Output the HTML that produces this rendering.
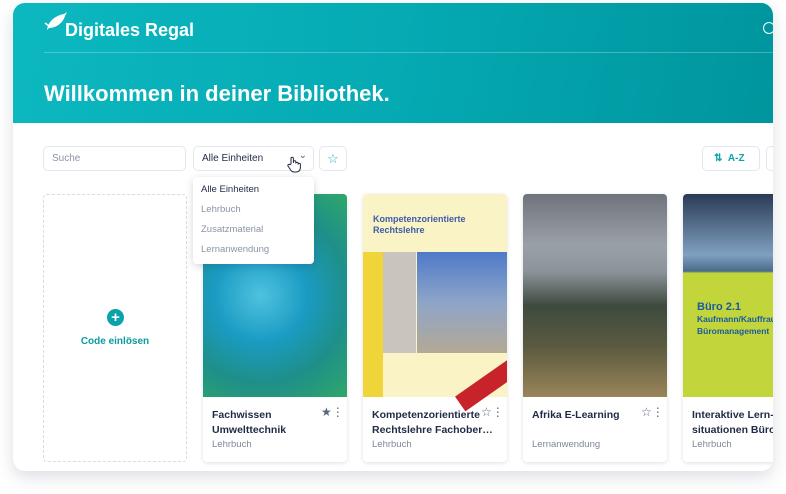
<!DOCTYPE html>
<html><head><meta charset="utf-8"><style>
*{margin:0;padding:0;box-sizing:border-box}
body{width:786px;height:494px;background:#fff;font-family:"Liberation Sans",sans-serif;position:relative;overflow:hidden}
.win{position:absolute;left:13px;top:3px;width:760px;height:468px;border-radius:12px;overflow:hidden;background:#fff;box-shadow:0 6px 16px rgba(60,70,100,.18)}
.hdr{position:absolute;left:0;top:0;width:760px;height:120px;background:linear-gradient(100deg,#0cb8c0 0%,#05aab3 50%,#00959e 100%)}
.abs{position:absolute}
.inp{position:absolute;border:1px solid #e3e7ef;border-radius:5px;background:#fff;font-size:10px}
.card{position:absolute;top:191px;width:144px;height:268px;border-radius:4px;background:#fff;box-shadow:0 1px 4px rgba(40,50,80,.15);overflow:hidden}
.cov{position:absolute;left:0;top:0;width:144px;height:203px}
.t{position:absolute;left:9px;top:214px;font-size:10.5px;font-weight:bold;color:#1f2a44;line-height:15px;white-space:nowrap}
.s{position:absolute;left:9px;top:245px;font-size:9.5px;color:#7d879b}
.ic{position:absolute;top:211px;font-size:12px;color:#5a6680}
</style></head><body>
<div class="win">
<div class="hdr">
 <svg class="abs" style="left:31px;top:8px" width="26" height="22" viewBox="0 0 26 22"><path d="M3 19 C4 11 10 5 20 3 L23 1 L21 5 C19 12 12 17 5 17 Z" fill="#fff"/><path d="M1 12 L5 15" stroke="#fff" stroke-width="1.5"/></svg>
 <div class="abs" style="left:52px;top:17px;color:#fff;font-size:18px;font-weight:bold">Digitales Regal</div>
 <div class="abs" style="left:750px;top:19px;width:12px;height:12px;border:1.5px solid #fff;border-radius:50%"></div>
 <div class="abs" style="left:31px;top:49px;width:729px;height:1px;background:rgba(255,255,255,.25)"></div>
 <div class="abs" style="left:31px;top:78px;color:#fff;font-size:22px;font-weight:bold">Willkommen in deiner Bibliothek.</div>
</div>
<div class="inp" style="left:30px;top:143px;width:143px;height:25px;padding:6px 8px;color:#8a93a6">Suche</div>
<div class="inp" style="left:180px;top:143px;width:121px;height:25px;padding:6px 8px;color:#1f2a44">Alle Einheiten<span style="position:absolute;right:6px;top:3px;color:#5a6680;font-size:10px">⌄</span></div>
<div class="inp" style="left:306px;top:143px;width:28px;height:25px;color:#2ab3bb;text-align:center;line-height:23px;font-size:13px">☆</div>
<div class="inp" style="left:689px;top:143px;width:58px;height:25px;color:#0aa2ab;font-weight:bold;line-height:23px;padding-left:11px">⇅&nbsp;&nbsp;A-Z</div>
<div class="inp" style="left:753px;top:143px;width:20px;height:25px"></div>
<div class="abs" style="left:30px;top:191px;width:144px;height:268px;border:1px dashed #d6dbe5;border-radius:4px">
 <div class="abs" style="left:63px;top:114px;width:17px;height:17px;border-radius:50%;background:#0aa2ab;color:#fff;text-align:center;font-weight:bold;font-size:15px;line-height:17px">+</div>
 <div class="abs" style="left:0;width:142px;top:141px;text-align:center;color:#0a9aa3;font-size:10px;font-weight:bold">Code einlösen</div>
</div>
<div class="card" style="left:190px"><div class="cov" style="background:radial-gradient(circle at 40% 50%,#4fc2e0 0,#1a9bc2 35%,#1e8f8a 65%,#2fa76a 100%)"></div>
 <div class="t">Fachwissen<br>Umwelttechnik</div><div class="s">Lehrbuch</div><div class="ic" style="left:118px">★⋮</div></div>
<div class="card" style="left:350px"><div class="cov" style="background:#faf3c6">
 <div class="abs" style="left:10px;top:20px;color:#3c5da8;font-size:9px;font-weight:bold;line-height:11px">Kompetenzorientierte<br>Rechtslehre</div>
 <div class="abs" style="left:0;top:58px;width:20px;height:145px;background:#f0d53a"></div>
 <div class="abs" style="left:20px;top:58px;width:33px;height:101px;background:#c9c4bd"></div>
 <div class="abs" style="left:54px;top:58px;width:90px;height:101px;background:linear-gradient(#4f79c9,#8ea5c8 50%,#b3a995)"></div>
 <div class="abs" style="left:90px;top:178px;width:80px;height:18px;background:#c8222a;transform:rotate(-35deg)"></div></div>
 <div class="t">Kompetenzorientierte<br>Rechtslehre Fachober…</div><div class="s">Lehrbuch</div><div class="ic" style="left:118px;background:#fff">☆⋮</div></div>
<div class="card" style="left:510px"><div class="cov" style="background:linear-gradient(#6f747c 0%,#9aa0a8 25%,#8c949a 38%,#3e4a3f 55%,#5a5a40 75%,#9a8458 100%)"></div>
 <div class="t">Afrika E-Learning</div><div class="s">Lernanwendung</div><div class="ic" style="left:118px">☆⋮</div></div>
<div class="card" style="left:670px"><div class="cov" style="background:linear-gradient(#2a3a55 0,#7fa0c0 30%,#4a6a8a 38%,#c2d63c 39%,#c2d63c 100%)">
 <div class="abs" style="left:14px;top:107px;color:#1b5aa0;font-size:11px;font-weight:bold;line-height:12px;white-space:nowrap">Büro 2.1<br><span style="font-size:8.5px">Kaufmann/Kauffrau<br>Büromanagement</span></div></div>
 <div class="t">Interaktive Lern-<br>situationen Büro</div><div class="s">Lehrbuch</div></div>
<div class="abs" style="left:180px;top:174px;width:121px;height:87px;background:#fff;border-radius:4px;box-shadow:0 2px 8px rgba(40,50,80,.2);font-size:9.5px;line-height:20px;padding:3px 8px;color:#8a93a6">
 <div style="color:#1f2a44">Alle Einheiten</div><div>Lehrbuch</div><div>Zusatzmaterial</div><div>Lernanwendung</div></div>
<svg class="abs" style="left:274px;top:153px" width="14" height="17" viewBox="0 0 14 17"><path d="M4 8 V2.5 a1.2 1.2 0 0 1 2.4 0 V7 V6 a1.2 1.2 0 0 1 2.4 0 V7.5 a1.2 1.2 0 0 1 2.4 0 V8.5 a1.1 1.1 0 0 1 2.2 0 V12 C13 15 11 16 9 16 H7 C5 16 4 15 3 13 L1 10 a1.2 1.2 0 0 1 2 -1.3 Z" fill="#fff" stroke="#1f2a44" stroke-width="1"/></svg>
</div>
</body></html>
